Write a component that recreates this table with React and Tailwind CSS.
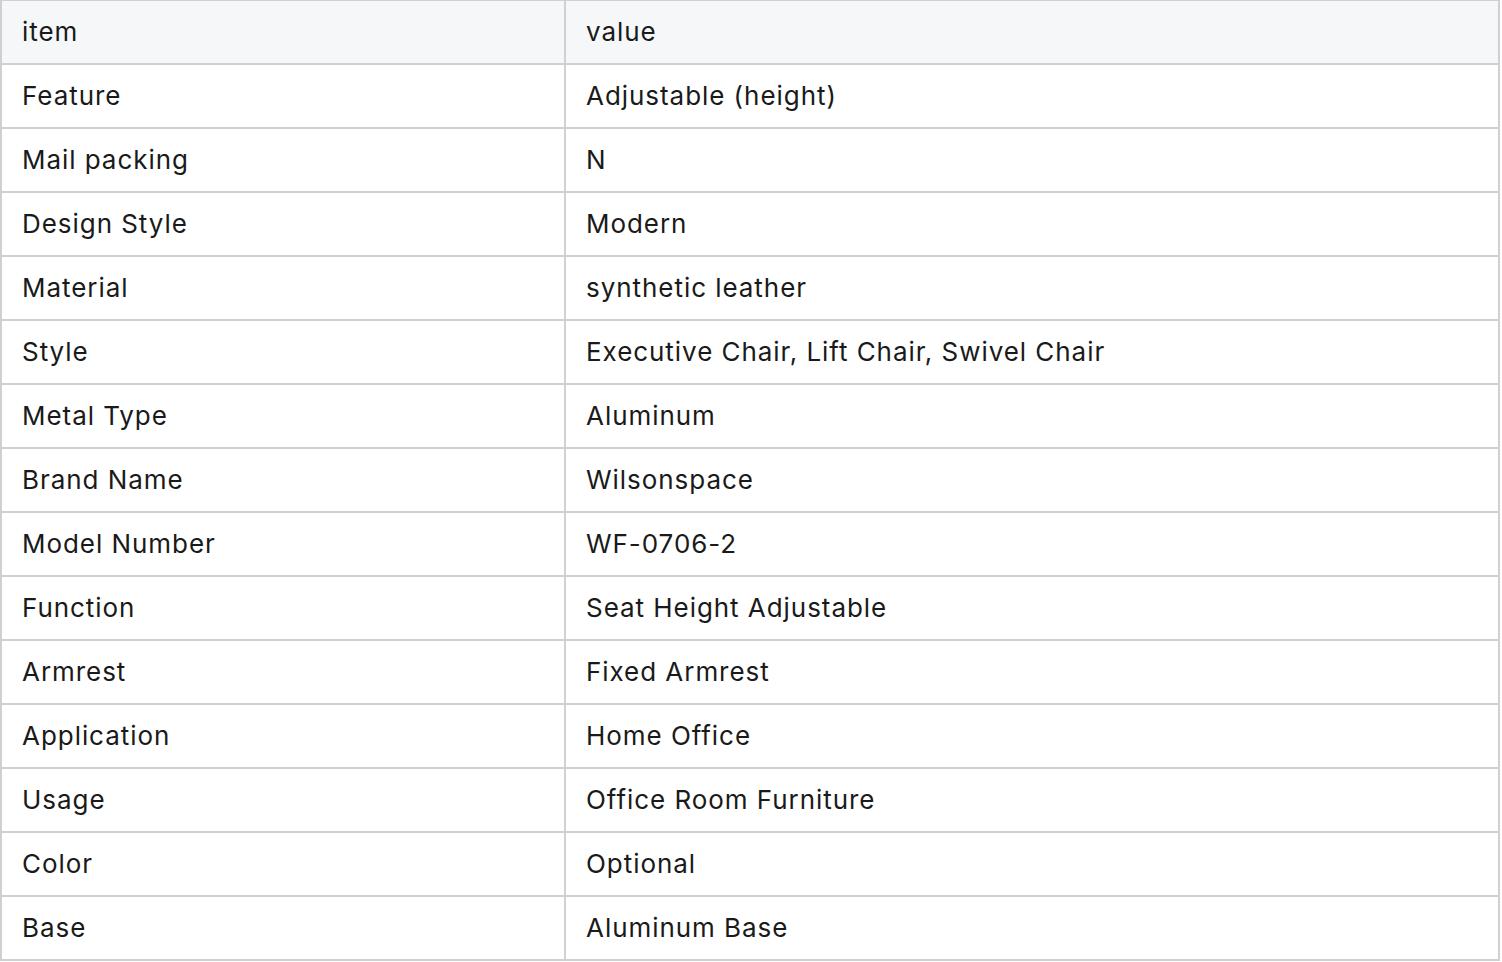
import React from "react";

const rows = [
  ["Feature", "Adjustable (height)"],
  ["Mail packing", "N"],
  ["Design Style", "Modern"],
  ["Material", "synthetic leather"],
  ["Style", "Executive Chair, Lift Chair, Swivel Chair"],
  ["Metal Type", "Aluminum"],
  ["Brand Name", "Wilsonspace"],
  ["Model Number", "WF-0706-2"],
  ["Function", "Seat Height Adjustable"],
  ["Armrest", "Fixed Armrest"],
  ["Application", "Home Office"],
  ["Usage", "Office Room Furniture"],
  ["Color", "Optional"],
  ["Base", "Aluminum Base"],
];

export default function App() {
  const cell = "border-2 border-[#d0d0d0] h-[64px] px-[20px] py-0 text-left align-middle font-normal";

  return (
    <div className="bg-white min-h-screen" style={{ fontFamily: "Inter, 'Noto Sans', sans-serif" }}>
      <table className="border-collapse w-[1500px] -mt-px text-[26px] tracking-[0.95px] text-[#1a1a1a] leading-none">
        <thead>
          <tr className="bg-[#f6f7f9]">
            <th className={`${cell} w-[564px]`}>item</th>
            <th className={cell}>value</th>
          </tr>
        </thead>
        <tbody>
          {rows.map(([item, value]) => (
            <tr key={item}>
              <td className={cell}>{item}</td>
              <td className={cell}>{value}</td>
            </tr>
          ))}
        </tbody>
      </table>
    </div>
  );
}
